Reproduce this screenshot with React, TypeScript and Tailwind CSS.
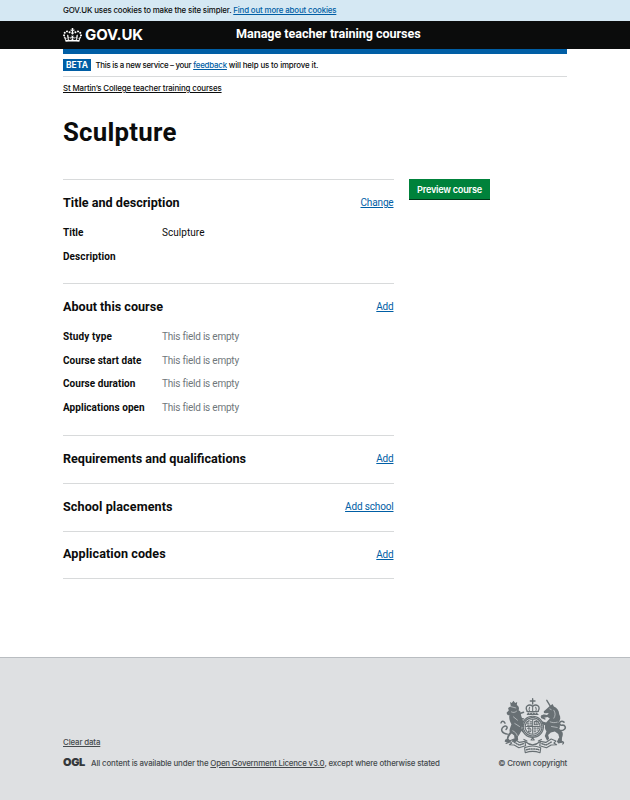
import React from 'react';

type Field = { label: string; labelClass: string; value?: string; empty?: boolean };

type SectionProps = {
  title: string;
  titleClass: string;
  action: string;
  actionClass: string;
  className: string;
  fields?: Field[];
};

function CrownLogo() {
  return (
    <svg viewBox="0 0 132 97" className="block h-[14px] w-[19px]" fill="currentColor" aria-hidden="true">
      <path d="M25 30.2c3.5 1.5 7.7-.2 9.1-3.7 1.5-3.6-.2-7.8-3.9-9.2-3.6-1.4-7.6.3-9.1 3.9-1.4 3.5.3 7.5 3.9 9zM9 39.5c3.6 1.5 7.8-.2 9.2-3.7 1.5-3.6-.2-7.8-3.9-9.1-3.6-1.5-7.6.2-9.1 3.8-1.4 3.5.3 7.5 3.8 9zM4.4 57.2c3.5 1.5 7.7-.2 9.1-3.8 1.5-3.6-.2-7.7-3.9-9.1-3.5-1.5-7.6.3-9.1 3.8-1.4 3.5.3 7.6 3.9 9.1zm38.3-21.4c3.5 1.5 7.7-.2 9.1-3.8 1.5-3.6-.2-7.7-3.9-9.1-3.6-1.5-7.6.3-9.1 3.8-1.3 3.6.4 7.7 3.9 9.1zm64.4-5.6c-3.6 1.5-7.8-.2-9.1-3.7-1.5-3.6.2-7.8 3.8-9.2 3.6-1.4 7.7.3 9.2 3.9 1.3 3.5-.4 7.5-3.9 9zm15.9 9.3c-3.6 1.5-7.7-.2-9.1-3.7-1.5-3.6.2-7.8 3.7-9.1 3.6-1.5 7.7.2 9.2 3.8 1.5 3.5-.3 7.5-3.8 9zm4.7 17.7c-3.6 1.5-7.8-.2-9.2-3.8-1.5-3.6.2-7.7 3.9-9.1 3.6-1.5 7.7.3 9.2 3.8 1.3 3.5-.4 7.6-3.9 9.1zM89.3 35.8c-3.6 1.5-7.8-.2-9.2-3.8-1.4-3.6.2-7.7 3.9-9.1 3.6-1.5 7.7.3 9.2 3.8 1.4 3.6-.3 7.7-3.9 9.1zM69.7 17.7l8.9 4.7V9.3l-8.9 2.8c-.2-.3-.5-.6-.9-.9L72.4 0H59.6l3.5 11.2c-.3.3-.6.5-.9.9l-8.8-2.8v13.1l8.8-4.7c.3.3.6.7.9.9l-5 15.4v.1c-.2.8-.4 1.6-.4 2.4 0 4.1 3.1 7.5 7 8.1h.2c.3 0 .7.1 1 .1.4 0 .7 0 1-.1h.2c4-.6 7.1-4.1 7.1-8.1 0-.8-.1-1.7-.4-2.4V34l-5.1-15.4c.4-.2.7-.6 1-.9zM66 92.8c16.9 0 32.8 1.1 47.1 3.2 4-16.9 8.9-26.7 14-33.5l-9.6-3.4c1 4.9 1.1 7.2 0 10.2-1.5-1.4-3-4.3-4.2-8.7L108.6 76c2.8-2 5-3.2 7.5-3.3-4.4 9.4-10 11.9-13.6 11.2-4.3-.8-6.3-4.6-5.6-7.9 1-4.7 5.7-5.9 8-.5 4.3-8.7-3-11.4-7.6-8.8 7.1-7.2 7.9-13.5 2.1-21.1-8 6.1-8.1 12.3-4.5 20.8-4.7-5.4-12.1-2.5-9.5 6.2 3.4-5.2 7.9-2 7.2 3.1-.6 4.3-6.4 7.8-13.5 7.2-10.3-.9-10.9-8-11.2-13.8 2.5-.5 7.1 1.8 11 7.3L80.2 60c-4.1 4.4-8 5.3-12.3 5.4 1.4-4.4 8-11.6 8-11.6H55.5s6.4 7.2 7.9 11.6c-4.2-.1-8-1-12.3-5.4l1.4 16.4c3.9-5.5 8.5-7.7 10.9-7.3-.3 5.8-.9 12.8-11.1 13.8-7.2.6-12.9-2.9-13.5-7.2-.7-5 3.8-8.3 7.1-3.1 2.7-8.7-4.6-11.6-9.4-6.2 3.7-8.5 3.6-14.7-4.6-20.8-5.8 7.6-5 13.9 2.2 21.1-4.7-2.6-11.9.1-7.7 8.8 2.3-5.5 7.1-4.2 8.1.5.7 3.3-1.3 7.1-5.7 7.9-3.5.7-9-1.8-13.5-11.2 2.5.1 4.7 1.3 7.5 3.3l-4.7-15.4c-1.2 4.4-2.7 7.2-4.3 8.7-1.1-3-.9-5.3 0-10.2l-9.5 3.4c5 6.9 9.9 16.7 14 33.5 14.8-2.1 30.8-3.2 47.7-3.2z" />
    </svg>
  );
}

function RoyalArms() {
  return (
    <svg viewBox="32 21 199 169" preserveAspectRatio="none" className="block h-[56px] w-[67px]" fill="none" stroke="#687074" strokeLinecap="round" strokeLinejoin="round" aria-hidden="true">
      {/* lion */}
      <path fill="#687074" stroke="none" d="M62 33l5 3 5-7 5 7 6-3-1 9c6 4 8 10 5 16l5 3c2 9 3 16 6 22l4 12-2 14-5-2 1 12-5 10-6 9 1 10-8 6-12-1 4-6 5-3-1-10-7-6c-5 4-9 10-10 16l6 6-2 6-15-3 1-6 5-2c1-9 4-16 9-21-3-8 3-16 5-24-5-8-8-18-6-28-4 3-9-2-8-7l6-6-2-8 8-5z" />
      <path strokeWidth="4.4" d="M54 130c-16-2-22-13-12-22 8-6 15 1 8 8M35 96c2-7 9-7 12 1M85 70l17-6M88 82l14 2M88 110l12 12" />
      <path stroke="#dee0e2" strokeWidth="1.8" d="M64 47l15 4M66 63c6 3 10 2 15-2M72 78l12 10M76 98l14 9M70 120c7 4 11 7 13 14" />
      {/* unicorn */}
      <path strokeWidth="4" d="M171 28l13 22" />
      <path fill="#687074" stroke="none" d="M179 46l9-7 4 8c10 4 15 12 16 23 5 9 4 17-2 24 5 8 5 14 2 20l10 11c2 7-1 14-4 21l6 9-15 3-4-6 7-12-3-10-10-8-12 3-8 8 3 11-6 6-7-14 5-15c-4-5-6-10-4-17l-9-5-1-8 13 4 11-12-7-5-12 3-9-5 9-5 11 1 5-6-9 1c-7 1-8-6-2-9z" />
      <path strokeWidth="4.8" d="M206 119c16 3 25-8 17-15-6-4-9 3-13-3-5-7 5-13 12-7M165 84l-9-4M166 74l-9 1" />
      <path stroke="#dee0e2" strokeWidth="1.8" d="M192 58c5 8 5 16 0 24M181 93c7 3 14 3 21 1M185 107l17 3M180 54l4 2" />
      {/* crown */}
      <path strokeWidth="4" d="M129 23v16M122 30h14M113 61c-9-15 5-24 16-15 11-9 25 0 16 15" />
      <path strokeWidth="3.2" d="M129 45v18M120 49c-3 5-2 10 0 13M138 49c3 5 2 10 0 13M112 62h34M113 71h32" />
      <path strokeWidth="4" strokeDasharray="3 5" d="M115 67h30" />
      {/* shield and garter */}
      <circle cx="129" cy="108" r="32" strokeWidth="3.4" />
      <circle cx="129" cy="108" r="27.5" strokeWidth="4.4" strokeDasharray="3 3.6" />
      <circle cx="129" cy="108" r="22.5" strokeWidth="3" />
      <path strokeWidth="3" d="M129 86v42M108 107h42" />
      <path strokeWidth="3.2" strokeDasharray="5 4" d="M112 93h14M112 98.5h14M114 103h12M133 112h14M133 117.5h12M133 123h9" />
      <path strokeWidth="3" d="M134 92h11v10h-11zM139.500 92v10M114 113c4-4 10-1 10 5 0 5-5 8-8 4M118 113v10M129 141l-5 7h10z" />
      {/* motto ribbon */}
      <path strokeWidth="3.4" d="M60 151l14-6 16 10 16-3 2 13-20 6-14-8-14-1 7-5zM198 151l-14-6-16 10-16-3-2 13 20 6 14-8 16-1-8-5zM108 153c12 12 30 12 42 0M105 171c14-6 34-6 48 0l-2 15c-14-5-30-5-44 0z" />
      <path strokeWidth="4.4" strokeDasharray="3 4" d="M74 154l15 9 15-5M184 154l-15 9-15-5M111 177c10-3 26-3 36 0" />
      <path strokeWidth="3.4" d="M206 146c6-8 11-3 7 2M212 154c8-4 12 3 6 6M50 158l8-3M103 146l9 5M155 146l-9 5" />
    </svg>
  );
}

function Section({ title, titleClass, action, actionClass, className, fields }: SectionProps) {
  return (
    <section className={`border-t border-[#d8dadb] font-[Roboto,sans-serif] ${className}`}>
      <div className="flex items-center justify-between pt-[11px]">
        <h2 className={`text-[12.6px] leading-[22px] font-bold ${titleClass}`}>{title}</h2>
        <a href="#" className={`pt-px text-[10px] leading-[22px] text-[#005ea5] underline ${actionClass}`}>
          {action}
        </a>
      </div>
      {fields && (
        <dl className="mt-[7px]">
          {fields.map((f) => (
            <div key={f.label} className="flex h-[23.7px] items-center text-[10px] leading-4">
              <dt className={`w-[99px] shrink-0 font-bold ${f.labelClass}`}>{f.label}</dt>
              <dd className={f.empty ? 'tracking-[-0.22px] text-[#6f777b]' : 'tracking-[0.04px]'}>{f.value}</dd>
            </div>
          ))}
        </dl>
      )}
    </section>
  );
}

const EMPTY = 'This field is empty';

export default function App() {
  return (
    <div className="flex h-[800px] flex-col overflow-hidden bg-white font-[Inter,Arial,sans-serif] text-[#0b0c0c]">
      <div className="h-[21px] bg-[#d5e8f3] px-[63px] text-[7.9px] leading-[20px] font-medium whitespace-nowrap">
        <span className="tracking-[-0.15px]">GOV.UK uses cookies to make the site simpler. </span>
        <a href="#" className="tracking-[-0.15px] text-[#005ea5] underline">Find out more about cookies</a>
      </div>

      <header className="h-7 bg-[#0b0c0c] px-[63px] text-white">
        <div className="flex h-7 items-center whitespace-nowrap">
          <a href="#" className="flex w-[173px] items-center gap-[3px]">
            <CrownLogo />
            <span className="text-[15px] leading-7 font-bold tracking-[-0.12px]">GOV.UK</span>
          </a>
          <span className="pb-0.5 font-[Roboto,sans-serif] text-[12.6px] leading-[26px] font-bold tracking-[-0.05px]">
            Manage teacher training courses
          </span>
        </div>
      </header>

      <div className="mx-[63px] h-[5px] shrink-0 bg-[#005ea5]" />

      <main className="mx-[63px] flex-1">
        <div className="flex h-[23px] items-center border-b border-[#d8dadb] text-[7.9px] font-medium whitespace-nowrap">
          <strong className="mr-[4.5px] flex h-3 w-[28px] items-center justify-center bg-[#005ea5] text-[8.4px] leading-3 font-bold tracking-[0.1px] text-white">
            BETA
          </strong>
          <span className="pt-[1.5px]">
            <span className="tracking-[-0.29px]">This is a new service – your </span>
            <a href="#" className="tracking-[-0.2px] text-[#005ea5] underline">feedback</a>
            <span className="tracking-[-0.14px]"> will help us to improve it.</span>
          </span>
        </div>

        <nav className="h-[23px] text-[7.9px] leading-[23px] font-medium tracking-[-0.136px]">
          <a href="#" className="underline">St Martin’s College teacher training courses</a>
        </nav>

        <h1 className="mt-[24px] mb-[39px] font-[Roboto,sans-serif] text-[25.8px] leading-4 font-bold tracking-[0.24px]">
          <span className="block h-4 whitespace-nowrap">Sculpture</span>
        </h1>

        <div className="flex items-start gap-[15.5px]">
          <div className="w-[330.5px] border-b border-[#d8dadb]">
            <Section
              title="Title and description"
              titleClass="tracking-[0.01px]"
              action="Change"
              actionClass="tracking-[-0.15px]"
              className="h-[104px]"
              fields={[
                { label: 'Title', labelClass: 'tracking-[0.04px]', value: 'Sculpture' },
                { label: 'Description', labelClass: 'tracking-[0.11px]' },
              ]}
            />
            <Section
              title="About this course"
              titleClass="tracking-[0px]"
              action="Add"
              actionClass="tracking-[-0.2px]"
              className="h-[152px]"
              fields={[
                { label: 'Study type', labelClass: 'tracking-[0.12px]', value: EMPTY, empty: true },
                { label: 'Course start date', labelClass: 'tracking-[0.03px]', value: EMPTY, empty: true },
                { label: 'Course duration', labelClass: 'tracking-[0.04px]', value: EMPTY, empty: true },
                { label: 'Applications open', labelClass: 'tracking-[0.05px]', value: EMPTY, empty: true },
              ]}
            />
            <Section
              title="Requirements and qualifications"
              titleClass="tracking-[0px]"
              action="Add"
              actionClass="tracking-[-0.2px]"
              className="h-[48px]"
            />
            <Section
              title="School placements"
              titleClass="tracking-[0.09px]"
              action="Add school"
              actionClass="tracking-[-0.16px]"
              className="h-[47.5px]"
            />
            <Section
              title="Application codes"
              titleClass="tracking-[0.08px]"
              action="Add"
              actionClass="tracking-[-0.2px]"
              className="h-[47.5px]"
            />
          </div>
          <button className="h-[21px] w-[81px] bg-[#00823b] text-[9.2px] leading-5 font-semibold tracking-[-0.25px] whitespace-nowrap text-white shadow-[inset_0_-1px_0_#003618]">
            Preview course
          </button>
        </div>
      </main>

      <footer className="flex h-[143px] shrink-0 items-end justify-between border-t border-[#b9bdc1] bg-[#dee0e2] px-[63px] pb-[31px] text-[7.9px] leading-3 font-medium whitespace-nowrap text-[#454a4d]">
        <div>
          <a href="#" className="tracking-[-0.14px] underline">Clear data</a>
          <div className="mt-2 flex items-center">
            <span className="w-[28px] pb-px text-[11px] leading-3 font-black tracking-[-0.4px] text-[#34383b]">OGL</span>
            <span>
              <span className="tracking-[-0.15px]">All content is available under the </span>
              <a href="#" className="tracking-[-0.185px] underline">Open Government Licence v3.0</a>
              <span className="tracking-[-0.17px]">, except where otherwise stated</span>
            </span>
          </div>
        </div>
        <div className="flex flex-col items-end gap-[3px]">
          <RoyalArms />
          <a href="#" className="tracking-[-0.2px]">© Crown copyright</a>
        </div>
      </footer>
    </div>
  );
}
